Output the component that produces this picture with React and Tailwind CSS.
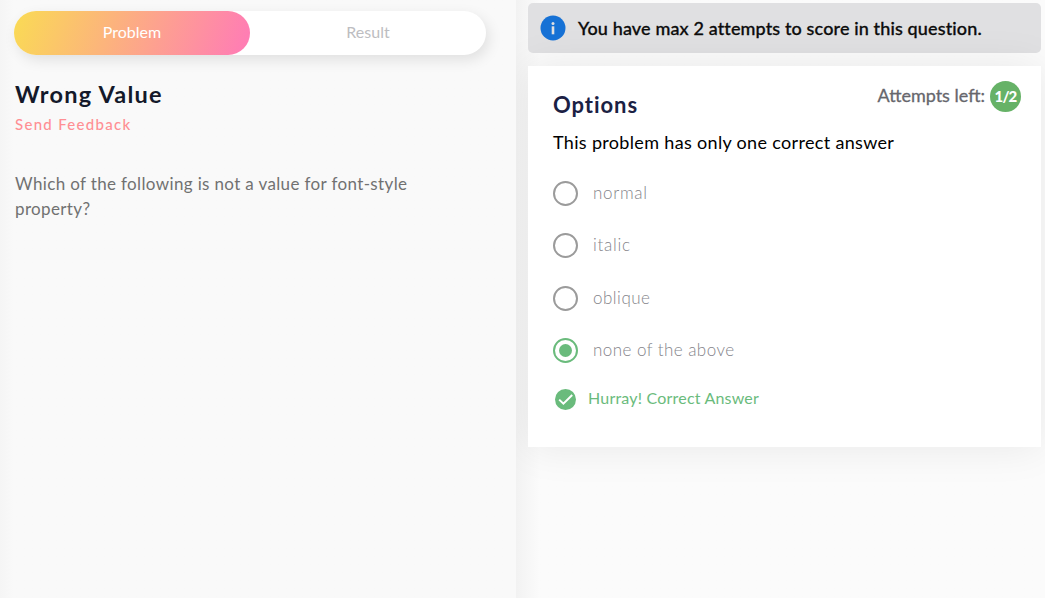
const options = [
  { label: 'normal', tracking: 'tracking-[0.7px]' },
  { label: 'italic', tracking: 'tracking-[0.75px]' },
  { label: 'oblique', tracking: 'tracking-[0.5px]' },
  { label: 'none of the above', tracking: 'tracking-[0.45px]', selected: true },
];

function Radio({ selected }) {
  return (
    <span
      className={
        selected
          ? 'flex size-[25px] shrink-0 items-center justify-center rounded-full border-2 border-[#6abb7c]'
          : 'flex size-[25px] shrink-0 items-center justify-center rounded-full border-2 border-[#9b9b9b]'
      }
    >
      {selected && <span className="size-[13px] rounded-full bg-[#6abb7c]" />}
    </span>
  );
}

export default function App() {
  return (
    <div className="flex h-[598px] w-[1045px] overflow-hidden bg-[#fbfbfb] font-['Lato','Open_Sans',sans-serif]">
      <section className="relative z-10 h-full w-[516px] shrink-0 bg-[#f9f9f9] bg-linear-to-r from-[#f5f5f5] to-[#f9f9f9] to-[14px] pl-[14px] pt-[11px]">
        <div className="flex h-11 w-[472px] rounded-full bg-white text-base shadow-[3px_5px_14px_rgba(0,0,0,0.1)]">
          <div className="flex w-1/2 items-center justify-center rounded-full bg-[linear-gradient(109deg,#fad956_2%,#ff7eb3_96%)] pb-0.5 text-white">
            <span>Problem</span>
          </div>
          <div className="flex w-1/2 items-center justify-center pb-0.5 text-[#bdbdc1]">
            <span>Result</span>
          </div>
        </div>
        <h1 className="mt-6 pl-px text-[23.5px] leading-[30px] font-bold tracking-[1.25px] whitespace-nowrap text-[#14192a]">Wrong Value</h1>
        <p className="mt-[5px] pl-px text-[15px] leading-5 font-medium tracking-[1.3px] whitespace-nowrap text-[#ff8f94]">Send Feedback</p>
        <p className="mt-[37px] pl-px text-[17px] leading-[25px] tracking-[0.36px] whitespace-nowrap text-[#717171]">
          Which of the following is not a value for font-style
          <br />
          property?
        </p>
      </section>

      <section className="h-full flex-1 bg-linear-to-r from-[#f2f2f2] to-[#fbfbfb] to-[24px] pl-3 pt-[3px]">
        <div className="flex h-[50px] w-[513px] items-center rounded-[5px] bg-[#e0e0e2] pl-3">
          <svg className="size-[26px] shrink-0" viewBox="0 0 26 26">
            <circle cx="13" cy="13" r="12.5" fill="#1671d5" />
            <circle cx="13" cy="8.4" r="1.5" fill="#e0e0e2" />
            <rect x="11.7" y="11.3" width="2.6" height="8" fill="#e0e0e2" />
          </svg>
          <span className="ml-3 text-[18px] font-medium tracking-[0.13px] whitespace-nowrap text-[#0c0c0c] [-webkit-text-stroke:0.3px_#0c0c0c]">
            You have max 2 attempts to score in this question.
          </span>
        </div>

        <div className="mt-[13px] h-[381px] w-[513px] bg-white pt-[15px] pr-5 pl-[25px] shadow-[0_0_40px_rgba(0,0,0,0.08)]">
          <div className="flex h-[42px] justify-between">
            <h2 className="mt-[9px] text-[22px] leading-[30px] font-bold tracking-[0.95px] text-[#1b2144]">Options</h2>
            <div className="flex h-[31px] items-center gap-[5px]">
              <span className="pb-0.5 text-[18px] whitespace-nowrap text-[#66666c] [-webkit-text-stroke:0.3px_#66666c]">Attempts left:</span>
              <span className="flex size-[31px] items-center justify-center rounded-full bg-[#66b267] text-[15px] font-black tracking-[-0.9px] text-white">1/2</span>
            </div>
          </div>
          <p className="mt-[7px] text-[18px] leading-6 tracking-[0.33px] whitespace-nowrap text-black">This problem has only one correct answer</p>
          <ul className="mt-[27px] flex flex-col gap-[27.4px]">
            {options.map((option) => (
              <li key={option.label} className="flex h-[25px] items-center">
                <Radio selected={option.selected} />
                <span className={`ml-[15px] -mt-0.5 text-[17px] font-light whitespace-nowrap text-[#84848a] ${option.tracking}`}>{option.label}</span>
              </li>
            ))}
          </ul>
          <div className="mt-6 flex h-6 items-center pl-0.5">
            <svg className="size-[21px] shrink-0" viewBox="0 0 21 21">
              <circle cx="10.5" cy="10.5" r="10.5" fill="#6abb7c" />
              <path d="M4.2 10.6 8.4 14.7 17.2 6" fill="none" stroke="white" strokeWidth="2" />
            </svg>
            <span className="ml-3 pb-0.5 text-base tracking-[0.2px] whitespace-nowrap text-[#6abb7c]">Hurray! Correct Answer</span>
          </div>
        </div>
      </section>
    </div>
  );
}
